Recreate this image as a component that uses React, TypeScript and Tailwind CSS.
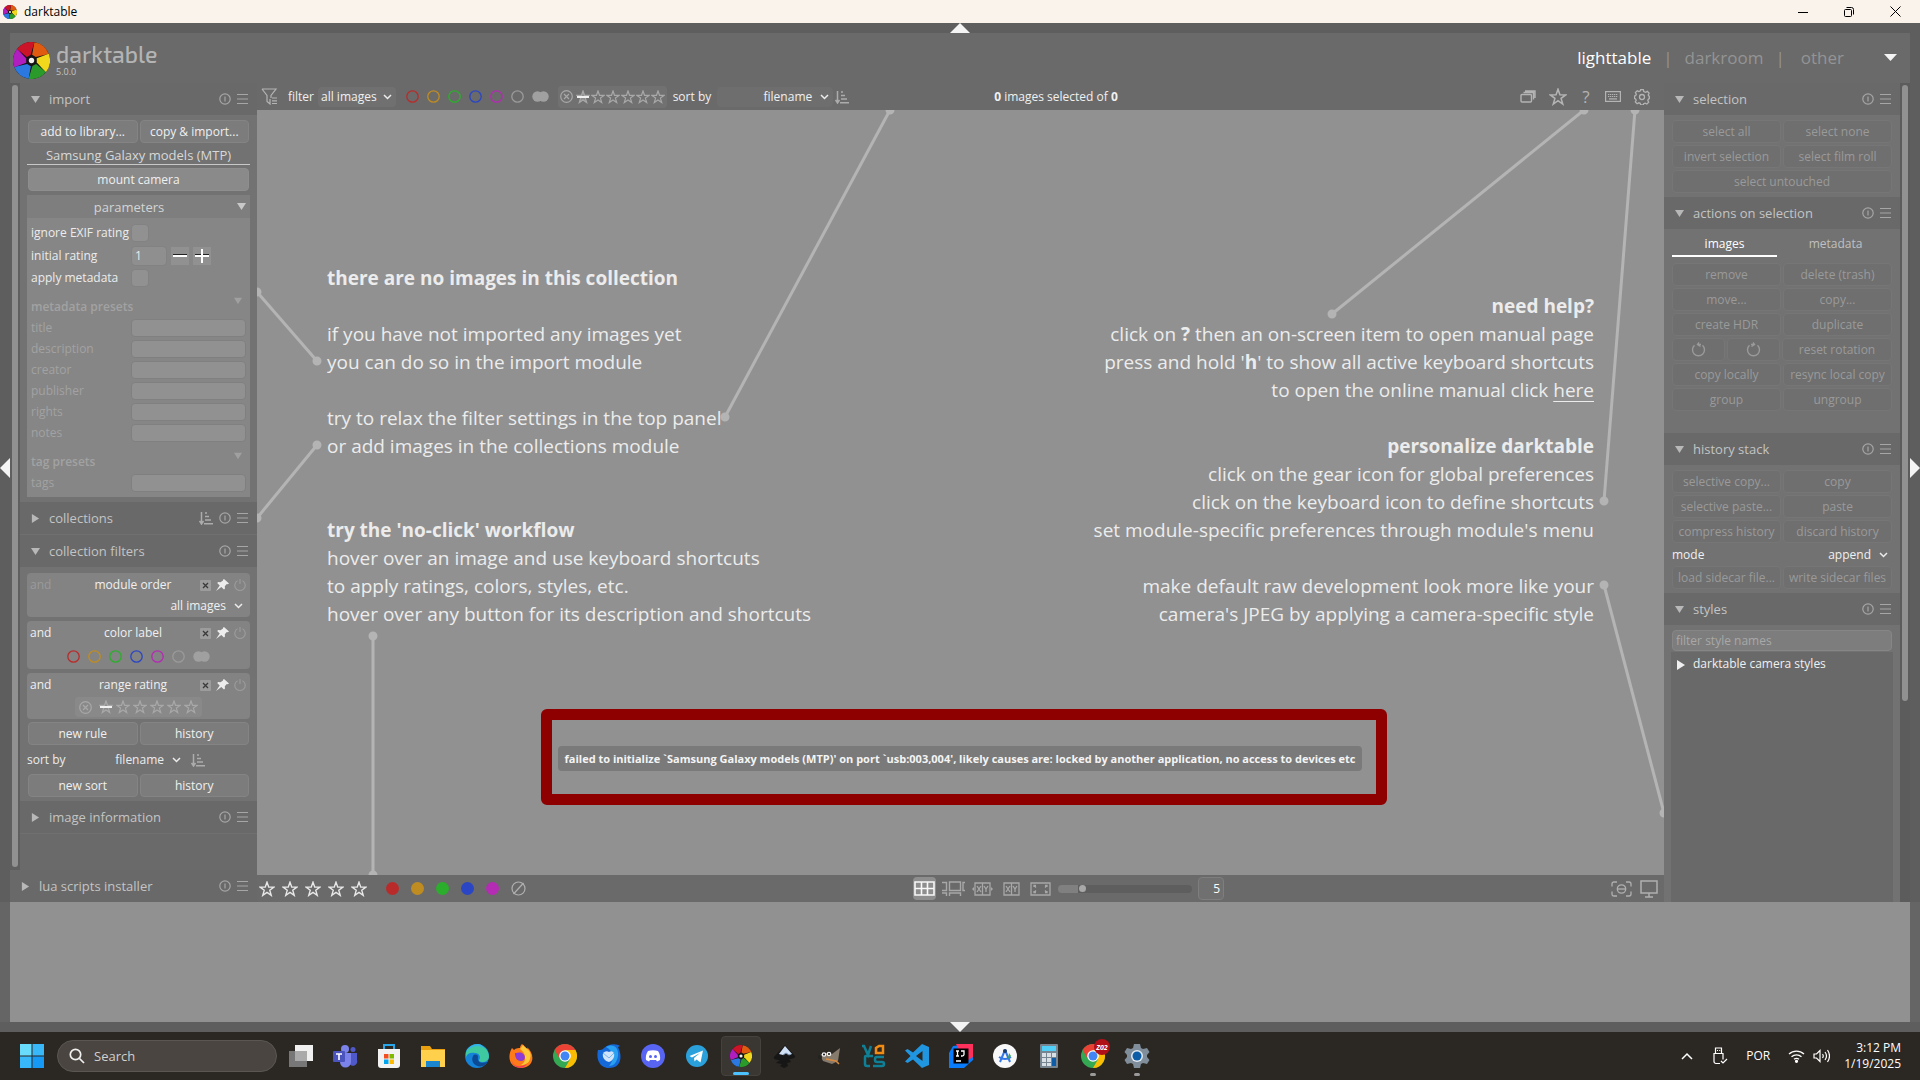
import { useState } from 'react'
import type { ReactNode } from 'react'

const FONT = "font-['Segoe_UI','Open_Sans',sans-serif]"

const LABEL_COLORS = ['#b92b2b', '#bf8c22', '#2bae2b', '#2b46c4', '#b42bb4']

const BLADES = ['#e05a10', '#f2d81c', '#2a9a2a', '#2a78e0', '#b01ec0', '#cc1428']

function Aperture({ size }: { size: number }) {
  return (
    <svg width={size} height={size} viewBox="-18 -18 36 36" aria-hidden="true">
      <circle r="18" fill="#141414" />
      {BLADES.map((c, i) => (
        <path key={c} d="M1 -5.5 L4 -17.5 A18 18 0 0 1 17.200 -5.2 L4.500 -3.2 Z" transform={`rotate(${i * 60 - 4})`} fill={c} />
      ))}
      <circle r="2.6" fill="#f0f0f0" />
    </svg>
  )
}

function Triangle({ dir, size = 9, color = '#b8b8b8' }: { dir: 'down' | 'right' | 'left' | 'up'; size?: number; color?: string }) {
  const d = { down: 'M0 1h10L5 9z', up: 'M0 9h10L5 1z', right: 'M1 0v10l8-5z', left: 'M9 0v10L1 5z' }[dir]
  return <svg width={size} height={size} viewBox="0 0 10 10" fill={color} aria-hidden="true"><path d={d} /></svg>
}

function Chevron() {
  return <svg className="shrink-0" width="9" height="6" viewBox="0 0 9 6" fill="none" stroke="#ececec" strokeWidth="1.5" aria-hidden="true"><path d="M1 1l3.500 3.500L8 1" /></svg>
}

function ResetIcon() {
  return (
    <svg width="12" height="12" viewBox="0 0 12 12" fill="none" stroke="currentColor" strokeWidth="1.200" aria-hidden="true">
      <circle cx="6" cy="6" r="5.200" /><path d="M6 3.500v5" />
    </svg>
  )
}

function MenuIcon() {
  return <svg width="11" height="12" viewBox="0 0 11 12" stroke="currentColor" strokeWidth="1.200" aria-hidden="true"><path d="M0 1.500h11M0 6h11M0 10.500h11" /></svg>
}

function SortIcon() {
  return (
    <svg width="14" height="14" viewBox="0 0 14 14" fill="none" stroke="#acacac" strokeWidth="1.500" aria-hidden="true">
      <path d="M2.500 1v11M.5 10l2 3 2-3M6 2h2M6 5.500h4M6 9h6M5 12.700h9" />
    </svg>
  )
}

function Star({ size = 14, color = '#a8a8a8', struck = false }: { size?: number; color?: string; struck?: boolean }) {
  return (
    <svg width={size} height={size} viewBox="0 0 14 14" fill={struck ? '#8d8d8d' : 'none'} stroke={color} strokeWidth="1.200" aria-hidden="true">
      <path d="M7 1l1.500 4.300 4.500.1-3.600 2.700 1.300 4.400L7 9.900l-3.700 2.600 1.300-4.400L1 5.400l4.500-.1z" />
      {struck && <path d="M1 7h12" stroke="#f0f0f0" strokeWidth="2" />}
    </svg>
  )
}

function RejectIcon() {
  return (
    <svg width="13" height="13" viewBox="0 0 13 13" fill="none" stroke="#a8a8a8" strokeWidth="1.200" aria-hidden="true">
      <circle cx="6.500" cy="6.500" r="5.800" /><path d="M4 4l5 5M9 4l-5 5" />
    </svg>
  )
}

function LabelRings() {
  return (
    <div className="flex items-center gap-2">
      {[...LABEL_COLORS, '#9a9a9a'].map((c) => (
        <button key={c} aria-label="color label" className="flex">
          <svg width="13" height="13" viewBox="0 0 13 13" fill="none" stroke={c} strokeWidth="1.300"><circle cx="6.500" cy="6.500" r="5.700" /></svg>
        </button>
      ))}
      <button aria-label="all labels" className="flex">
        <svg width="17" height="11" viewBox="0 0 17 11" fill="#a0a0a0"><circle cx="5.500" cy="5.500" r="5.200" /><circle cx="11.500" cy="5.500" r="5.200" /></svg>
      </button>
    </div>
  )
}

function RatingRange({ tight = false }: { tight?: boolean }) {
  return (
    <div className={`flex items-center rounded-sm bg-white/5 ${tight ? 'h-[22px] gap-px px-[2px]' : 'h-5 gap-[3px] px-1'}`}>
      <RejectIcon />
      <span className="w-px" />
      <Star struck />
      {[1, 2, 3, 4, 5].map((n) => <Star key={n} />)}
    </div>
  )
}

function ModuleHeader({ title, open = false, sort = false }: { title: string; open?: boolean; sort?: boolean }) {
  return (
    <div className="flex h-8 shrink-0 items-center bg-[#696969] pr-[9px] pl-[11px] text-[#c4c4c4]">
      <button className="flex grow items-center gap-[9px] text-left text-[13px]">
        <Triangle dir={open ? 'down' : 'right'} />
        {title}
      </button>
      <div className="flex items-center gap-[6px] text-[#a6a6a6]">
        {sort && <SortIcon />}
        <button aria-label="reset"><ResetIcon /></button>
        <button aria-label="presets"><MenuIcon /></button>
      </div>
    </div>
  )
}

function Btn({ children, dim = false }: { children: ReactNode; dim?: boolean }) {
  return (
    <button className={`flex h-[23px] min-w-0 flex-1 items-center justify-center rounded-sm border whitespace-nowrap ${dim ? 'border-[#767676] bg-[#6f6f6f] text-[#9a9a9a]' : 'border-[#848484] bg-[#7c7c7c] text-[#f0f0f0]'}`}>
      {children}
    </button>
  )
}

function Row({ items }: { items: ReactNode[] }) {
  return <div className="flex gap-[2px]">{items.map((it, i) => <Btn key={i} dim>{it}</Btn>)}</div>
}

function Rotate({ flip = false }: { flip?: boolean }) {
  return (
    <svg width="15" height="15" viewBox="0 0 15 15" fill="none" stroke="currentColor" strokeWidth="1.400" className={flip ? '-scale-x-100' : ''}>
      <path d="M3.500 3.300A6 6 0 1 0 11.500 3.300M8 .5L6.500 2.500l3 2M6.500 2.500h3.500" />
    </svg>
  )
}

const META = ['title', 'description', 'creator', 'publisher', 'rights', 'notes']

function MetaField({ name }: { name: string }) {
  return (
    <label className="flex h-[21px] items-center text-[#a2a2a2]">
      <span className="w-[100px]">{name}</span>
      <input disabled className="h-[18px] min-w-0 flex-1 rounded-sm border border-[#808080] bg-[#919191]" />
    </label>
  )
}

function PresetTitle({ children }: { children: string }) {
  return (
    <div className="flex h-5 justify-between pr-1 font-semibold text-[#a2a2a2]">
      <span className="self-end leading-[20px]">{children}</span>
      <Triangle dir="down" size={8} color="#a0a0a0" />
    </div>
  )
}

function ImportModule() {
  const [rating, setRating] = useState(1)
  return (
    <div className="flex flex-col px-[7px] py-[5px]">
      <div className="flex gap-[2px] px-px">
        <Btn>add to library...</Btn>
        <Btn>copy &amp; import...</Btn>
      </div>
      <div className="mb-[3px] h-[22px] border-b border-[#c8c8c8] text-center text-[13px] leading-[24px] text-[#d8d8d8]">Samsung Galaxy models (MTP)</div>
      <button className="mx-px h-[23px] rounded-sm border border-[#8e8e8e] bg-[#8a8a8a] text-[#f0f0f0]">mount camera</button>
      <div className="mt-1 flex flex-col bg-[#868686] pb-1">
        <button className="flex h-[23px] items-center bg-[#7e7e7e] pr-1 text-[13px] text-[#d4d4d4]">
          <span className="grow pr-[6px]">parameters</span>
          <Triangle dir="down" color="#c8c8c8" />
        </button>
        <div className="flex flex-col px-1 pt-[3px] text-[#ececec]">
          <label className="flex h-[23px] items-center">
            <span className="w-[100px]">ignore EXIF rating</span>
            <input type="checkbox" className="size-[18px] appearance-none rounded-sm border border-[#828282] bg-[#919191]" />
          </label>
          <div className="flex h-[23px] items-center gap-1">
            <label htmlFor="rating" className="w-24">initial rating</label>
            <input id="rating" value={rating} readOnly className="h-[20px] w-9 rounded-sm border border-[#828282] bg-[#8f8f8f] pl-[3px]" />
            <button aria-label="decrease" onClick={() => setRating(rating - 1)} className="flex size-[18px] items-center justify-center bg-[#919191]">
              <svg width="14" height="14" viewBox="0 0 14 14"><path d="M0 7h14" stroke="#fff" strokeWidth="2" /><path d="M0 5.500h14" stroke="#222" /></svg>
            </button>
            <button aria-label="increase" onClick={() => setRating(rating + 1)} className="flex size-[18px] items-center justify-center bg-[#919191]">
              <svg width="14" height="14" viewBox="0 0 14 14"><path d="M0 5.500h14" stroke="#222" /><path d="M0 7h14M7 0v14" stroke="#fff" strokeWidth="2" /></svg>
            </button>
          </div>
          <label className="flex h-[22px] items-center">
            <span className="w-[100px]">apply metadata</span>
            <input type="checkbox" className="size-[18px] appearance-none rounded-sm border border-[#828282] bg-[#919191]" />
          </label>
          <div className="h-2" />
          <PresetTitle>metadata presets</PresetTitle>
          {META.map((m) => <MetaField key={m} name={m} />)}
          <div className="h-[9px]" />
          <PresetTitle>tag presets</PresetTitle>
          <MetaField name="tags" />
        </div>
      </div>
    </div>
  )
}

function Rule({ name, dimAnd = false, children }: { name: string; dimAnd?: boolean; children: ReactNode }) {
  return (
    <div className="rounded-sm bg-[#838383] px-[3px] pb-[2px] text-[#f0f0f0]">
      <div className="flex h-6 items-center">
        <span className={`w-9 ${dimAnd ? 'text-[#9a9a9a]' : ''}`}>and</span>
        <span className="grow text-center">{name}</span>
        <span className="flex items-center gap-[5px] pr-px">
          <button aria-label="remove rule">
            <svg width="11" height="11" viewBox="0 0 11 11"><rect width="11" height="11" rx="1" fill="#9c9c9c" /><path d="M3 3l5 5M8 3l-5 5" stroke="#3a3a3a" strokeWidth="1.300" /></svg>
          </button>
          <button aria-label="pin rule">
            <svg width="13" height="12" viewBox="0 0 13 12" fill="#ececec"><path d="M8 0l5 4.500-1.200.8-1-.3-2 2.200.2 2.300-1 1L5.300 8 0 12l3.700-5.500L1.200 4l1-1 2.300.3L7 1.500 7 .8z" /></svg>
          </button>
          <button aria-label="toggle rule">
            <svg width="12" height="12" viewBox="0 0 12 12" fill="none" stroke="#9a9a9a" strokeWidth="1.200"><path d="M3.500 1.800a5.200 5.200 0 1 0 5 0M6 0v5" /></svg>
          </button>
        </span>
      </div>
      {children}
    </div>
  )
}

function LeftPanel() {
  return (
    <aside className="flex w-[247px] shrink-0 flex-col bg-[#6a6a6a]">
      <div className="flex grow">
        <div className="w-[10px] bg-[#5f5f5f] px-[2px] pt-[2px]"><div className="h-[782px] rounded-full bg-[#919191]" /></div>
        <div className="flex min-w-0 flex-1 flex-col bg-[#6a6a6a]">
          <ModuleHeader title="import" open />
          <div className="bg-[#727272]"><ImportModule /></div>
          <ModuleHeader title="collections" sort />
          <div className="h-px bg-[#707070]" />
          <ModuleHeader title="collection filters" open />
          <div className="flex flex-col gap-1 bg-[#727272] px-[7px] pt-[6px] pb-1">
            <Rule name="module order" dimAnd>
              <button className="flex h-[18px] w-full items-center justify-end gap-2 pr-1">all images <Chevron /></button>
            </Rule>
            <Rule name="color label"><div className="flex h-[22px] items-center justify-center"><LabelRings /></div></Rule>
            <Rule name="range rating"><div className="flex h-[20px] items-center justify-center"><RatingRange /></div></Rule>
            <div className="-mt-px flex gap-[2px] px-px"><Btn>new rule</Btn><Btn>history</Btn></div>
            <div className="flex h-[21px] items-center text-[#ececec]">
              <span className="grow">sort by</span>
              <button className="mr-[10px] flex items-center gap-2">filename <Chevron /></button>
              <span className="mr-[45px]"><SortIcon /></span>
            </div>
            <div className="flex gap-[2px] px-px"><Btn>new sort</Btn><Btn>history</Btn></div>
          </div>
          <ModuleHeader title="image information" />
          <div className="h-px bg-[#707070]" />
        </div>
      </div>
      <ModuleHeader title="lua scripts installer" />
    </aside>
  )
}

function RightPanel() {
  return (
    <aside className="flex w-[246px] shrink-0 bg-[#727272]">
      <div className="flex min-w-0 flex-1 flex-col">
        <ModuleHeader title="selection" open />
        <div className="flex flex-col gap-[2px] px-2 pt-[5px] pb-1">
          <Row items={['select all', 'select none']} />
          <Row items={['invert selection', 'select film roll']} />
          <Row items={['select untouched']} />
        </div>
        <ModuleHeader title="actions on selection" open />
        <div className="flex flex-col gap-[2px] px-2 pb-[22px]">
          <div className="mb-1 flex h-7 gap-[2px]">
            <button className="h-7 w-[105px] border-b-2 border-white pt-1 text-white">images</button>
            <button className="h-7 flex-1 pt-1 pb-[2px] text-[#c0c0c0]">metadata</button>
          </div>
          <Row items={['remove', 'delete (trash)']} />
          <Row items={['move...', 'copy...']} />
          <Row items={['create HDR', 'duplicate']} />
          <div className="flex gap-[2px]">
            <div className="flex flex-1 gap-[2px]"><Btn dim><Rotate /></Btn><Btn dim><Rotate flip /></Btn></div>
            <Btn dim>reset rotation</Btn>
          </div>
          <Row items={['copy locally', 'resync local copy']} />
          <Row items={['group', 'ungroup']} />
        </div>
        <ModuleHeader title="history stack" open />
        <div className="flex flex-col gap-[2px] px-2 pt-[5px] pb-1">
          <Row items={['selective copy...', 'copy']} />
          <Row items={['selective paste...', 'paste']} />
          <Row items={['compress history', 'discard history']} />
          <button className="flex h-[19px] items-center justify-between pr-1 text-[#f0f0f0]">
            mode <span className="flex items-center gap-2">append <Chevron /></span>
          </button>
          <Row items={['load sidecar file...', 'write sidecar files']} />
        </div>
        <ModuleHeader title="styles" open />
        <div className="flex grow flex-col px-[7px] pt-[5px]">
          <input aria-label="filter style names" placeholder="filter style names" className="mx-px h-[21px] rounded-sm border border-[#868686] bg-[#7d7d7d] px-[3px] placeholder:text-[#a8a8a8]" />
          <button className="mt-px flex grow items-start gap-[7px] bg-[#696969] px-[5px] pt-1 text-[#f0f0f0]">
            <span className="flex h-[17px] items-center"><Triangle dir="right" color="#f0f0f0" size={10} /></span>
            darktable camera styles
          </button>
        </div>
      </div>
      <div className="w-[10px] bg-[#5c5c5c] px-[2px] pt-[2px]"><div className="h-[616px] rounded-full bg-[#919191]" /></div>
    </aside>
  )
}

function FilterBar() {
  return (
    <div className="flex h-[27px] items-center bg-[#6a6a6a] pr-[14px] pl-1 text-[#f0f0f0]">
      <svg width="17" height="17" viewBox="0 0 17 17" fill="none" stroke="#b4b4b4" strokeWidth="1.200"><path d="M1 1h14L10 7.500V10M1 1l5 6.500v6l3 2.500v-5M11 10h5M11 12.800h5M11 15.500h5" /></svg>
      <span className="ml-[10px]">filter</span>
      <button className="ml-1 flex h-5 items-center gap-[6px] rounded-sm bg-[#707070] pr-1 pl-[3px]">all images <Chevron /></button>
      <div className="ml-[10px]"><LabelRings /></div>
      <div className="ml-[9px]"><RatingRange tight /></div>
      <span className="ml-[6px]">sort by</span>
      <button className="ml-[6px] flex h-5 w-[116px] items-center justify-end gap-2 rounded-sm bg-[#6e6e6e] pr-1">filename <Chevron /></button>
      <span className="ml-[2px]"><SortIcon /></span>
      <span className="ml-[145px]"><b>0</b> images selected of <b>0</b></span>
      <div className="flex flex-1 items-center justify-end gap-[13px] text-[#b4b4b4]">
        <button aria-label="grouping">
          <svg width="16" height="13" viewBox="0 0 16 13" fill="none" stroke="currentColor" strokeWidth="1.400"><rect x="1" y="4.500" width="10.500" height="7.500" rx="1" /><path d="M3.500 2.500h10v7M5 1h10v7" /></svg>
        </button>
        <button aria-label="overlays"><Star size={18} color="#b4b4b4" /></button>
        <button className="w-3 text-[17px] leading-none">?</button>
        <button aria-label="shortcuts">
          <svg width="16" height="11" viewBox="0 0 16 11" fill="none" stroke="currentColor" strokeWidth="1.200"><rect x=".6" y=".6" width="14.800" height="9.800" /><path d="M3 3.500h10M3 5.500h10" strokeDasharray="1.300 .7" /><path d="M4 7.900h8" /></svg>
        </button>
        <button aria-label="preferences">
          <svg width="16" height="16" viewBox="-8 -8 16 16" fill="none" stroke="currentColor" strokeWidth="1.300">
            <circle r="2.500" />
            <path d="M-1.300 -7.300h2.600l.5 1.800 1.800.8 1.700-.9 1.800 1.800-.9 1.700.6 1.200 .5.200v2.400l-1 .5-.5 1.300.9 1.700-1.800 1.800-1.700-.9-1.500.6-.5 1.300h-2.400l-.6-1.700-1.400-.5-1.700.9-1.800-1.800.9-1.700-.7-1.400-1-.3v-2.400l1.200-.5.6-1.400-.9-1.700 1.800-1.800 1.700.9 1.500-.7z" />
          </svg>
        </button>
      </div>
    </div>
  )
}

function Canvas() {
  return (
    <main className="relative grow bg-[#919191] text-[19px] leading-[28px] text-[#ececec]">
      <svg className="absolute inset-0 h-full w-full" viewBox="0 0 1407 765" preserveAspectRatio="none" stroke="#b4b4b4" fill="#b4b4b4" strokeWidth="3" aria-hidden="true">
        {[[0, 182, 60, 251], [633, 0, 468, 307], [60, 335, 0, 408], [116, 526, 116, 765], [1327, 0, 1075, 204], [1378, 0, 1347, 391], [1347, 475, 1407, 703]].map(([a, b, c, d]) => (
          <g key={`${a}-${b}`}><line x1={a} y1={b} x2={c} y2={d} /><circle cx={a} cy={b} r="3" /><circle cx={c} cy={d} r="3" /></g>
        ))}
      </svg>
      <div className="relative flex justify-between pt-[154px] pr-[70px] pl-[70px]">
        <div className="whitespace-nowrap">
          <h2 className="font-bold">there are no images in this collection</h2>
          <p className="mt-7">if you have not imported any images yet<br />you can do so in the import module</p>
          <p className="mt-7">try to relax the filter settings in the top panel<br />or add images in the collections module</p>
          <h2 className="mt-14 font-bold">try the 'no-click' workflow</h2>
          <p>hover over an image and use keyboard shortcuts<br />to apply ratings, colors, styles, etc.<br />hover over any button for its description and shortcuts</p>
        </div>
        <div className="pt-7 text-right whitespace-nowrap">
          <h2 className="font-bold">need help?</h2>
          <p>click on <b>?</b> then an on-screen item to open manual page<br />press and hold '<b>h</b>' to show all active keyboard shortcuts<br />to open the online manual click <a href="#manual" className="underline underline-offset-4">here</a></p>
          <h2 className="mt-7 font-bold">personalize darktable</h2>
          <p>click on the gear icon for global preferences<br />click on the keyboard icon to define shortcuts<br />set module-specific preferences through module's menu</p>
          <p className="mt-7">make default raw development look more like your<br />camera's JPEG by applying a camera-specific style</p>
        </div>
      </div>
      <div className="absolute bottom-[70px] left-[284px] flex h-24 w-[846px] items-center rounded-md border-[11px] border-[#8e0000] px-[6px] pt-[2px]">
        <div role="alert" className="w-[804px] rounded-sm bg-[#7a7a7a] text-center text-[11px] leading-[25px] font-bold whitespace-nowrap text-[#f4f4f4]">
          failed to initialize `Samsung Galaxy models (MTP)' on port `usb:003,004', likely causes are: locked by another application, no access to devices etc
        </div>
      </div>
    </main>
  )
}

function ViewBar() {
  return (
    <div className="flex h-[27px] items-center justify-between bg-[#6a6a6a] px-[2px]">
      <div className="flex items-center">
        <div className="flex gap-[7px]">
          {[1, 2, 3, 4, 5].map((n) => <button key={n} aria-label={`rate ${n}`}><Star size={16} color="#e8e8e8" /></button>)}
        </div>
        <div className="ml-[19px] flex items-center gap-3">
          {LABEL_COLORS.map((c) => <button key={c} aria-label="set label"><svg width="13" height="13"><circle cx="6.500" cy="6.500" r="6.500" fill={c} /></svg></button>)}
          <button aria-label="clear labels">
            <svg width="15" height="15" viewBox="0 0 15 15" fill="none" stroke="#b0b0b0" strokeWidth="1.200"><circle cx="7.500" cy="7.500" r="6.500" /><path d="M2.500 13l10-11" /></svg>
          </button>
        </div>
      </div>
      <div className="flex items-center text-[#a8a8a8]">
        <button aria-label="filemanager" className="flex h-[23px] w-[23px] items-center justify-center rounded-sm bg-[#8e8e8e]">
          <svg width="21" height="15" viewBox="0 0 21 15" fill="none" stroke="#f8f8f8" strokeWidth="1.600"><path d="M1 1h19v13H1zM1 7.500h19M7.500 1v13M13.500 1v13" /></svg>
        </button>
        <button aria-label="zoomable" className="ml-[6px]">
          <svg width="23" height="15" viewBox="0 0 23 15" fill="none" stroke="currentColor" strokeWidth="1.400"><path d="M7.500 1h11v8.500h-11zM0 1.500h4.500v8H0M23 1.500h-2v8h2M0 12h4.500v3M7.500 15v-3h11v3" /></svg>
        </button>
        <button aria-label="culling" className="ml-[7px]">
          <svg width="21" height="14" viewBox="0 0 21 14" fill="none" stroke="currentColor" strokeWidth="1.300"><path d="M3 1h15v12H3zM10.500 1v12M5 4l4 6M9 4l-4 6M12 4l2 3 2-3M14 7v3" /><path d="M0 7l2-2v4zM21 7l-2-2v4z" fill="currentColor" stroke="none" /></svg>
        </button>
        <button aria-label="dynamic culling" className="ml-[10px]">
          <svg width="17" height="14" viewBox="0 0 17 14" fill="none" stroke="currentColor" strokeWidth="1.300"><path d="M1 1h15v12H1zM8.500 1v12M3 4l4 6M7 4l-4 6M10 4l2 3 2-3M12 7v3" /></svg>
        </button>
        <button aria-label="preview" className="ml-[10px]">
          <svg width="21" height="14" viewBox="0 0 21 14" fill="none" stroke="currentColor" strokeWidth="1.300"><path d="M1 1h19v12H1z" /><path d="M4 5V3.500h2M17 5V3.500h-2M4 9v1.500h2M17 9v1.500h-2M4 3.500l2 2M17 3.500l-2 2M4 10.500l2-2M17 10.500l-2-2" /></svg>
        </button>
        <input aria-label="images per row" type="range" min={1} max={25} defaultValue={5} className="ml-[7px] h-2 w-[134px] appearance-none rounded-full bg-linear-to-r from-[#808080] from-15% to-[#5e5e5e] to-15% [&::-webkit-slider-thumb]:size-[7px] [&::-webkit-slider-thumb]:appearance-none [&::-webkit-slider-thumb]:rounded-full [&::-webkit-slider-thumb]:bg-[#a8a8a8]" />
        <input aria-label="images per row value" defaultValue="5" className="ml-[6px] h-[23px] w-[26px] rounded-sm border border-[#7e7e7e] bg-[#707070] pr-[3px] text-right text-white" />
      </div>
      <div className="flex items-center gap-2 pr-1 text-[#b0b0b0]">
        <button aria-label="focus peaking">
          <svg width="21" height="16" viewBox="0 0 21 16" fill="none" stroke="currentColor" strokeWidth="1.300"><path d="M6 1H3Q1 1 1 3v2.500M15 1h3q2 0 2 2v2.500M6 15H3q-2 0-2-2v-2.500M15 15h3q2 0 2-2v-2.500" /><circle cx="10.500" cy="8" r="4.200" /><path d="M7 8h7" /></svg>
        </button>
        <button aria-label="display profile">
          <svg width="18" height="18" viewBox="0 0 18 18" fill="none" stroke="currentColor" strokeWidth="1.500"><path d="M1 1h16v12H1zM9 13v4M5 17h8" /></svg>
        </button>
      </div>
    </div>
  )
}

function ChromeLogo() {
  return (
    <>
      <circle cx="12" cy="12" r="12" fill="#34a853" />
      <path d="M1.600 6A12 12 0 0 1 22.400 6H12z" fill="#ea4335" />
      <path d="M22.400 6A12 12 0 0 1 12 24l5.200-9L12 6z" fill="#fbbc04" />
      <path d="M1.600 6l5.200 9L12 6z" fill="#ea4335" />
      <circle cx="12" cy="12" r="5.800" fill="#fff" /><circle cx="12" cy="12" r="4.500" fill="#4285f4" />
    </>
  )
}

const APPS: { name: string; art: ReactNode; state?: 'active' | 'running' }[] = [
  { name: 'Task view', art: <><rect x="6" y="1" width="18" height="16" fill="#f0f0f0" /><rect x="0" y="7" width="18" height="16" fill="#777" /><rect x="6" y="7" width="12" height="10" fill="#aaa" /></> },
  { name: 'Teams', art: <><circle cx="12" cy="5" r="4" fill="#7b83eb" /><circle cx="20" cy="5.500" r="2.500" fill="#5059c9" /><path d="M16 9h8v7a4 4 0 0 1-8 3z" fill="#5059c9" /><path d="M7 9h11v9a5 5 0 0 1-11 0z" fill="#7b83eb" /><rect y="7" width="12" height="11" rx="1" fill="#4b53bc" /><path d="M3 10h6M6 10v6" stroke="#fff" strokeWidth="1.600" /></> },
  { name: 'Microsoft Store', art: <><path d="M7 7V1h10v6" fill="none" stroke="#28a8ea" strokeWidth="2" /><path d="M1 5h22v16a3 3 0 0 1-3 3H4a3 3 0 0 1-3-3z" fill="#f2f2f2" /><path d="M7 10h4.500v4.500H7z" fill="#f25022" /><path d="M12.500 10H17v4.500h-4.500z" fill="#7fba00" /><path d="M7 15.500h4.500V20H7z" fill="#00a4ef" /><path d="M12.500 15.500H17V20h-4.500z" fill="#ffb900" /></> },
  { name: 'File Explorer', art: <><path d="M0 2h9l2 3h13v10H0z" fill="#e8a010" /><path d="M0 6h24v17H0z" fill="#ffd04c" /><path d="M5 23v-6h14v6z" fill="#1a86d0" /></> },
  { name: 'Edge', art: <><circle cx="12" cy="12" r="12" fill="#1583d8" /><path d="M1 8A12 12 0 0 1 24 12c0 4-3 6-7 6-2 0-3-1-3-2 2-2 1-7-4-7-5-1-8 1-9 4z" fill="#3fc9a0" /><path d="M1 8A12 12 0 0 1 13 0c3 0 5 2 6 4-6-3-14-2-18 4z" fill="#34b4e4" /><path d="M8 12c-3 6 3 12 10 10 3-1 4-3 4-4-6 2-10 0-9-5 0-3-4-3-5-1z" fill="#0c4b94" /></> },
  { name: 'Firefox', art: <><path d="M13 0c3 2 4 4 5 5 1-1 0-2 0-2 8 7 8 20-6 21C0 24-2 12 3 4l2 2c2-2 5-2 6-2 0-2 1-3 2-4z" fill="#ff7a18" /><path d="M14 1c3 4 10 6 7 14-1 4-5 6-9 6 7-4 4-13-1-16z" fill="#ffc83a" /><path d="M2 14c1 8 8 11 16 6-4 6-15 5-16-6z" fill="#f0306a" /><path d="M6 9c3 0 5-1 7 0 4 2 4 8-1 8-4 0-6-3-6-8z" fill="#8c3ad8" /></> },
  { name: 'Chrome', art: <ChromeLogo /> },
  { name: 'Thunderbird', art: <><path d="M1 6c3 0 4 0 6-2 6-5 13-4 16-2l-2 1c5 10 3 21-9 21C2 24-1 14 1 6z" fill="#1568d8" /><path d="M9 3c7-4 13 0 12 9-1 6-4 10-9 10 6-7 5-15-3-19z" fill="#2aa0f0" /><path d="M6 9q3-3 6-1 3-2 5 1c1 5-2 8-5 9-4-1-7-4-6-9z" fill="#cfe4fb" /><path d="M6 9l6 5 5-5" fill="none" stroke="#7ab4f0" /></> },
  { name: 'Discord', art: <><circle cx="12" cy="12" r="12" fill="#5865f2" /><path d="M7 7c3-1 7-1 10 0 2 3 2.500 6 2 9l-3 1.500-1-1.500H9l-1 1.500L5 16c-.5-3 0-6 2-9z" fill="#fff" /><circle cx="9.500" cy="12.500" r="1.500" fill="#5865f2" /><circle cx="14.500" cy="12.500" r="1.500" fill="#5865f2" /></> },
  { name: 'Telegram', art: <><circle cx="12" cy="12" r="11" fill="#2aa1da" /><path d="M4.500 12L18 6.500l-2.500 12-4-3-2 2-.5-3.500L15 9l-8 4.500z" fill="#fff" /></> },
  { name: 'darktable', art: <svg x="1" y="1" width="22" height="22"><Aperture size={22} /></svg>, state: 'active' },
  { name: 'Inkscape', art: <><path d="M12 1l10 11c1 2-3 3-6 3l2 3-4 1 1 3-4 2-4-2 2-2-6-1 4-3c-4 0-7-1-6-3z" fill="#161616" /><path d="M12 2l7 8-3 1-3-2-3 2-4-1z" fill="#cfe0f5" /><path d="M10 11l3-2 3 2 2-1" fill="none" stroke="#7d93b4" /></> },
  { name: 'GIMP', art: <><path d="M3 11l6-2 6 1 8-6-2 13-6 3-9-3z" fill="#857a6c" /><circle cx="7" cy="10.500" r="2.300" fill="#f5f5f5" /><circle cx="12" cy="10" r="2.300" fill="#f5f5f5" /><circle cx="7" cy="10.500" r="1" fill="#111" /><circle cx="12" cy="10" r="1" fill="#111" /><circle cx="3" cy="13" r="2" fill="#222" /><path d="M9 15l10 2 3 3" fill="none" stroke="#d88a40" strokeWidth="1.500" /></> },
  { name: 'VNC', art: <><path d="M1 2h2l4 9 3-9M12 12H5q-1 0-1 1v7q0 2 2 2h3M23 13h-7q-2 0-2 2v1q0 2 2 2h5q2 0 2 2t-2 2h-9" fill="none" stroke="#0e7f94" strokeWidth="2.500" /><path d="M15 9V4l3-2h4v7z" fill="none" stroke="#f08c14" strokeWidth="2.500" /></> },
  { name: 'Visual Studio Code', art: <path fillRule="evenodd" d="M17 0l7 3v18l-7 3-9-8.500L2.500 19 0 17.500 5.500 12 0 6.500 2.500 5 8 8.500zM17.500 7L11 12l6.500 5z" fill="#2196e0" /> },
  { name: 'IntelliJ IDEA', art: <><path d="M4 2l15-2 5 4v12l-9 8H0V9z" fill="#087cfa" /><path d="M7 0h17v13l-5 3L9 4z" fill="#fe315d" /><rect x="4.500" y="4.500" width="15" height="15" fill="#000" /><path d="M7 7h3M8.500 7v5M7 12h3M12 7h3v3.500q0 1.500-2 1.500h-1M7 17h5" stroke="#fff" strokeWidth="1.300" fill="none" /></> },
  { name: 'Android Studio', art: <><circle cx="12" cy="12" r="12" fill="#f8f8f8" /><path d="M12 6L7 18M12 6l5 12M6 13q6 4 12 0" stroke="#3478e8" strokeWidth="2" fill="none" /><circle cx="12" cy="7" r="2" fill="#173a6a" /><path d="M16 9l2 3-3 3z" fill="#34a853" /></> },
  { name: 'Calculator', art: <><rect x="3" y="0" width="18" height="24" rx="1" fill="#778591" /><rect x="5" y="2" width="14" height="5" fill="#50d0f8" /><path d="M5 9h4v4H5zM10 9h4v4h-4zM15 9h4v4h-4zM5 14h4v4H5zM10 14h4v4h-4zM5 19h4v3H5zM10 19h4v3h-4z" fill="#d8dfe5" /><path d="M15 14h4v8h-4z" fill="#0e5ca8" /></> },
  { name: 'Chrome profile', art: <><ChromeLogo /><circle cx="21" cy="3" r="8" fill="#b01018" /><text x="21" y="6" textAnchor="middle" fontSize="7" fontWeight="700" fontStyle="italic" fill="#fff">Z02</text></>, state: 'running' },
  { name: 'Settings', art: <><path d="M9 0h6l1 4 2 1 4-1 2.500 4-2.500 3v2l2.500 3L22 20l-4-1-2 1-1 4H9l-1-4-2-1-4 1-2.500-4L2 13v-2L-.5 8 2 4l4 1 2-1z" fill="#808d9a" /><circle cx="12" cy="12" r="6" fill="#e4eaf0" /><circle cx="12" cy="12" r="4.500" fill="#0c5ca8" /></>, state: 'running' },
]

function Taskbar() {
  return (
    <footer className="flex h-12 shrink-0 items-center bg-[#2b2723] pl-5 text-white">
      <button aria-label="Start">
        <svg width="24" height="24" viewBox="0 0 24 24" fill="#38b8f8"><path d="M0 0h11.500v11.500H0z" fill="#6adcfb" /><path d="M12.500 0H24v11.500H12.500zM0 12.500h11.500V24H0z" /><path d="M12.500 12.500H24V24H12.500z" fill="#1698f5" /></svg>
      </button>
      <label className="ml-[13px] flex h-8 w-[220px] items-center gap-[9px] rounded-full border border-[#5a5652] bg-[#4a4540] pl-[11px]">
        <svg width="16" height="16" viewBox="0 0 16 16" fill="none" stroke="#f0f0f0" strokeWidth="1.700"><circle cx="6.500" cy="6.500" r="5.200" /><path d="M10.500 10.500L15 15" /></svg>
        <input placeholder="Search" aria-label="Search" className="w-32 bg-transparent text-[13px] placeholder:text-[#d0d0d0]" />
      </label>
      <div className="ml-[2px] flex">
        {APPS.map((a) => (
          <div key={a.name} className="flex w-11 justify-center">
            <button aria-label={a.name} className={`relative flex size-10 items-center justify-center rounded-sm ${a.state === 'active' ? 'border border-[#45423e] bg-[#3a3733]' : ''}`}>
              <svg width="24" height="24" viewBox="0 0 24 24" overflow="visible">{a.art}</svg>
              {a.state === 'active' && <span className="absolute bottom-0 h-[3px] w-4 rounded-full bg-[#4cc2ff]" />}
              {a.state === 'running' && <span className="absolute bottom-0 h-[3px] w-[6px] rounded-full bg-[#9a9a9a]" />}
            </button>
          </div>
        ))}
      </div>
      <div className="ml-auto flex items-center pr-[19px] text-[12px]">
        <button aria-label="hidden icons"><svg width="12" height="8" viewBox="0 0 12 8" fill="none" stroke="#fff" strokeWidth="1.500"><path d="M1 7l5-5 5 5" /></svg></button>
        <button aria-label="usb" className="ml-[19px]"><svg width="16" height="18" viewBox="0 0 16 18" fill="none" stroke="#fff" strokeWidth="1.200"><path d="M8 16.500H4a2 2 0 0 1-2-2V6.500h9v6M3.500 6.500V1h6v5.500M5 3.500h1M7.200 3.500h1" /><path d="M9 14l2 2 4-4" /></svg></button>
        <button className="ml-[18px]">POR</button>
        <button aria-label="network and volume" className="ml-[18px] flex gap-2">
          <svg width="17" height="14" viewBox="0 0 17 14" fill="none" stroke="#fff" strokeWidth="1.300"><path d="M1 5a11 11 0 0 1 15 0M3.500 7.700a7.500 7.500 0 0 1 10 0M6 10.300a4 4 0 0 1 5 0" /><circle cx="8.500" cy="12.300" r="1" fill="#fff" /></svg>
          <svg width="17" height="14" viewBox="0 0 17 14" fill="none" stroke="#fff" strokeWidth="1.200"><path d="M1 5h2.500L7 1.500v11L3.500 9H1zM9.500 5q1.500 2 0 4M12 3q3 4 0 8M14.500 1q4 6 0 12" /></svg>
        </button>
        <div className="ml-[14px] text-right leading-4">3:12 PM<br />1/19/2025</div>
      </div>
    </footer>
  )
}

export default function App() {
  return (
    <div className={`flex min-h-screen flex-col bg-[#5e5e5e] text-[12px] leading-4 ${FONT}`}>
      <header className="flex h-[23px] shrink-0 items-center bg-[#faf3ec] pl-[3px] text-black">
        <Aperture size={14} />
        <span className="ml-[7px]">darktable</span>
        <div className="ml-auto flex items-center gap-9 pr-[19px]">
          <button aria-label="minimize"><svg width="10" height="10" stroke="#000"><path d="M0 5.500h10" /></svg></button>
          <button aria-label="restore"><svg width="10" height="10" viewBox="0 0 10 10" fill="none" stroke="#000"><rect x=".5" y="2.500" width="7" height="7" rx="1" /><path d="M2.500 .5h5q2 0 2 2v5" /></svg></button>
          <button aria-label="close"><svg width="11" height="11" viewBox="0 0 11 11" stroke="#000"><path d="M.5.5l10 10M10.500.5l-10 10" /></svg></button>
        </div>
      </header>
      <button aria-label="hide top panel" className="flex h-[10px] justify-center"><svg width="20" height="10" fill="#f4f4f4"><path d="M0 10h20L10 0z" /></svg></button>
      <div className="flex grow">
        <button aria-label="hide left panel" className="flex w-[10px] items-center"><svg width="10" height="20" fill="#f4f4f4"><path d="M10 0v20L0 10z" /></svg></button>
        <div className="flex min-w-0 flex-1 flex-col bg-[#6a6a6a]">
          <div className="flex h-[50px] items-center pr-[13px] pl-[3px]">
            <div className="flex grow gap-[6px] pt-1">
              <Aperture size={37} />
              <div>
                <h1 className="text-[23px] leading-6 font-medium text-[#b4b4b4] font-['Exo_2','Noto_Sans',sans-serif]">darktable</h1>
                <div className="text-[9px] leading-3 text-[#c4c4c4]">5.0.0</div>
              </div>
            </div>
            <nav className="flex items-center text-[17px] text-[#949494]">
              <a href="#lighttable" className="text-white">lighttable</a>
              <span className="mx-3">|</span>
              <a href="#darkroom">darkroom</a>
              <span className="mx-3">|</span>
              <a href="#other" className="ml-1">other</a>
              <button aria-label="more views" className="ml-10"><svg width="13" height="8" fill="#f4f4f4"><path d="M0 0h13L6.500 7z" /></svg></button>
            </nav>
          </div>
          <div className="flex grow">
            <LeftPanel />
            <div className="flex min-w-0 flex-1 flex-col">
              <FilterBar />
              <Canvas />
              <ViewBar />
            </div>
            <RightPanel />
          </div>
        </div>
        <button aria-label="hide right panel" className="flex w-[10px] items-center"><svg width="10" height="20" fill="#f4f4f4"><path d="M0 0v20l10-10z" /></svg></button>
      </div>
      <div className="bg-[#656565] px-[10px]"><div className="h-[120px] bg-[#919191]" /></div>
      <button aria-label="hide filmstrip" className="flex h-[10px] justify-center"><svg width="20" height="10" fill="#f4f4f4"><path d="M0 0h20L10 10z" /></svg></button>
      <Taskbar />
    </div>
  )
}
